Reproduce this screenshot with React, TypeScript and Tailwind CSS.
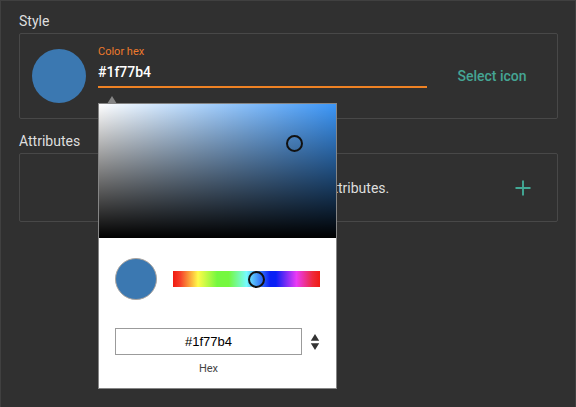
import { useState } from "react";

function ColorPicker({ color, onChange }: { color: string; onChange: (value: string) => void }) {
  return (
    <div
      role="dialog"
      aria-label="Color picker"
      className="absolute top-full left-0 z-10 mt-[17px] w-[239px] border border-[#858585] bg-white"
    >
      {/* Pointer towards the text field */}
      <svg className="absolute bottom-full left-2 h-2 w-[10px]" viewBox="0 0 10 8" aria-hidden="true">
        <path d="M5 0 10 8H0Z" fill="#858585" />
      </svg>
      <div className="relative h-[134px] bg-[#3c96f7]">
        <div className="absolute inset-0 bg-linear-to-r from-white to-transparent" />
        <div className="absolute inset-0 bg-linear-to-t from-black to-transparent" />
        <span className="absolute top-[31px] left-[187px] size-[17px] rounded-full border-2 border-[#111111]" />
      </div>
      <div className="flex items-center gap-4 px-4 pt-5">
        <span className="size-[42px] shrink-0 rounded-full border border-[#aaa49f] bg-[#3b78b1]" />
        <div className="relative h-4 flex-1 bg-[linear-gradient(to_right,#f01b12_0%,#f6402a_5%,#fffb4a_17%,#75f83f_30%,#75f83f_38%,#75fbfd_50%,#0a20f5_66%,#0a20f5_70%,#ea3bf5_84%,#ee2a3c_95%,#f01b12_100%)]">
          <span className="absolute top-0 left-[75px] size-[17px] rounded-full border-2 border-[#111111]" />
        </div>
      </div>
      <div className="flex gap-2 px-4 pt-7 pb-[11px]">
        <div className="flex flex-1 flex-col gap-[6px]">
          <input
            id="picker-hex"
            value={color}
            onChange={(event) => onChange(event.target.value)}
            className="h-[27px] w-full border border-[#9b9b9b] bg-white text-center font-['Liberation_Sans',Arial,sans-serif] text-[13px] text-black outline-none"
          />
          <label htmlFor="picker-hex" className="text-center text-[11px] leading-4 text-[#444444]">
            Hex
          </label>
        </div>
        <button type="button" aria-label="Change color format" className="flex h-[27px] w-[10px] items-center">
          <svg className="h-4 w-[10px]" viewBox="0 0 10 16" aria-hidden="true">
            <path d="M5 0 9.2 6.7H.8ZM5 16 .8 9.3H9.2Z" fill="#333333" />
          </svg>
        </button>
      </div>
    </div>
  );
}

export default function App() {
  const [color, setColor] = useState("#1f77b4");

  return (
    <main className="flex min-h-screen flex-col border-t border-r border-l border-[#404040] bg-[#303030] pt-[10px] pr-[17px] pl-[18px] font-[Roboto,sans-serif] text-[#dedede]">
      <h2 className="text-sm leading-5">Style</h2>
      <section className="mt-[2px] flex h-[86px] items-center rounded-xs border border-[#484848] pl-3">
        <span className="size-[54px] shrink-0 rounded-full bg-[#3b78b1]" />
        <div className="relative ml-3 flex-1 self-start border-b-2 border-[#ef8224] pt-[10px] pb-[2px]">
          <label htmlFor="color-hex" className="block text-[11px] leading-4 text-[#ee7a2c]">
            Color hex
          </label>
          <input
            id="color-hex"
            value={color}
            onChange={(event) => setColor(event.target.value)}
            className="block h-6 w-full bg-transparent text-sm font-medium text-white outline-none"
          />
          <ColorPicker color={color} onChange={setColor} />
        </div>
        <button type="button" className="w-[130px] text-sm font-medium text-[#45a594]">
          Select icon
        </button>
      </section>
      <h2 className="mt-3 text-sm leading-5">Attributes</h2>
      <section className="mt-[2px] flex h-[69px] items-center rounded-xs border border-[#484848] pr-[26px] pl-3">
        <p className="flex-1 pr-2 text-center text-sm">This icon does not have any attributes.</p>
        <button type="button" aria-label="Add attribute" className="size-4">
          <svg className="size-4" viewBox="0 0 16 16" aria-hidden="true">
            <path d="M8 .5v15M.5 8h15" stroke="#42a996" strokeWidth="1.9" />
          </svg>
        </button>
      </section>
    </main>
  );
}
